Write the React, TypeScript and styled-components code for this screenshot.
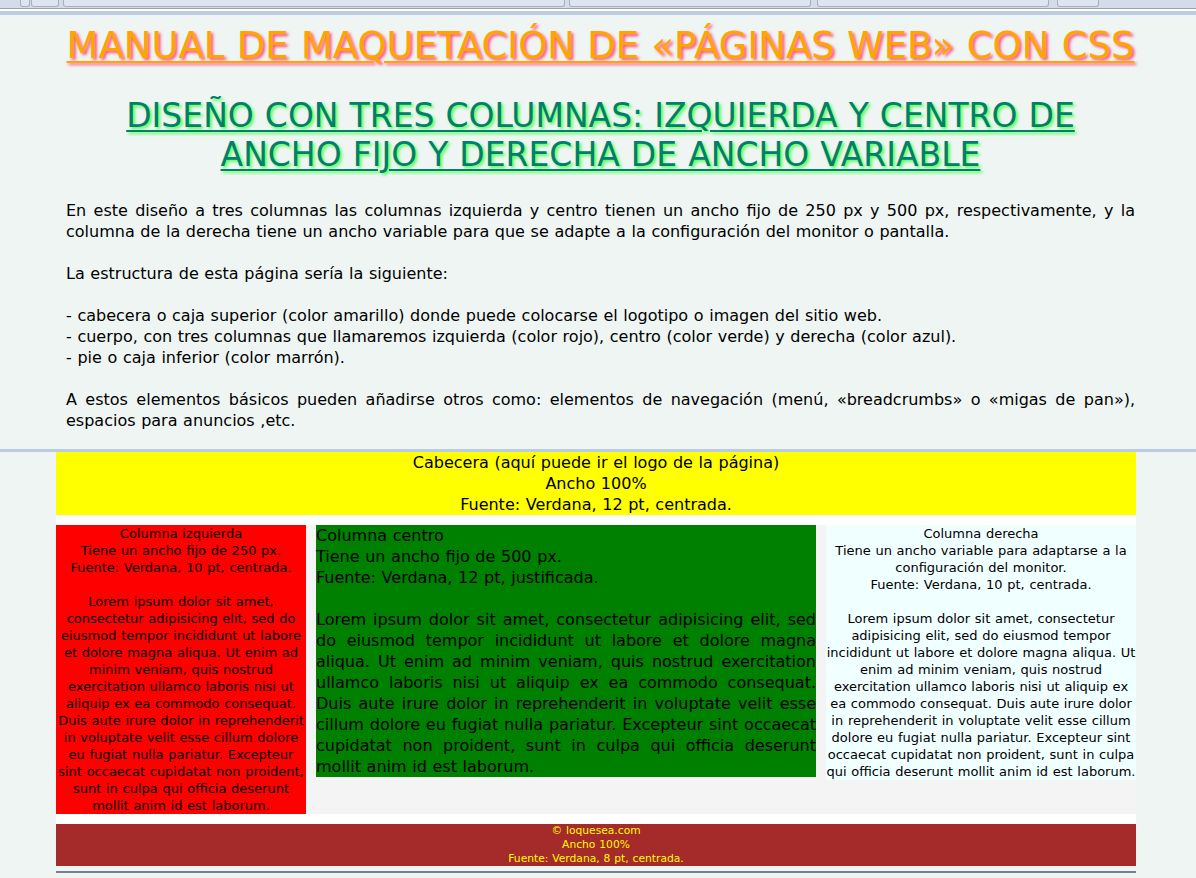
import React from "react";
import styled, { createGlobalStyle } from "styled-components";

const GlobalStyle = createGlobalStyle`
  html, body {
    margin: 0;
    padding: 0;
  }
  body {
    background: #eef5f3;
    font-family: "DejaVu Sans", Verdana, sans-serif;
    word-spacing: 0.034em;
    color: #000;
  }
`;

const LOREM =
  "Lorem ipsum dolor sit amet, consectetur adipisicing elit, sed do eiusmod tempor incididunt ut labore et dolore magna aliqua. Ut enim ad minim veniam, quis nostrud exercitation ullamco laboris nisi ut aliquip ex ea commodo consequat. Duis aute irure dolor in reprehenderit in voluptate velit esse cillum dolore eu fugiat nulla pariatur. Excepteur sint occaecat cupidatat non proident, sunt in culpa qui officia deserunt mollit anim id est laborum.";

// browser chrome strip at the very top of the capture
const Chrome = styled.div`
  height: 8px;
  background: #d4dcea;
  border-bottom: 1px solid #9aa2b2;
  display: flex;
  align-items: flex-start;
`;

const Tab = styled.span<{ $w: number; $gap: number }>`
  width: ${(p) => p.$w}px;
  margin-left: ${(p) => p.$gap}px;
  height: 6px;
  border: 1px solid #a7afbd;
  border-top: none;
  border-radius: 0 0 3px 3px;
  background: #dfe5f0;
`;

const ChromeEdge = styled.div`
  height: 2px;
  background: #fff;
  border-bottom: 4px solid #b8cce4;
`;

const Intro = styled.section`
  padding: 0 61px 0 66px;
`;

const MainTitle = styled.h1`
  margin: 10px 0 0;
  font-size: 37px;
  line-height: 42px;
  font-weight: normal;
  text-align: center;
  color: #ffa500;
  text-decoration: underline;
  text-decoration-thickness: 2px;
  text-underline-offset: 3px;
  text-shadow: 2px 2px 3px #ff4d80;
`;

const SubTitle = styled.h2`
  margin: 29px 0 0;
  font-size: 33px;
  line-height: 39px;
  font-weight: normal;
  text-align: center;
  color: #00806b;
  text-decoration: underline;
  text-decoration-thickness: 2px;
  text-underline-offset: 3px;
  text-shadow: 2px 2px 3px #4dff4d;
`;

const Text = styled.div`
  margin: 26px 0 18px;
  font-size: 16px;
  line-height: 21px;
  text-align: justify;

  p {
    margin: 0 0 21px;
  }
  p:last-child {
    margin-bottom: 0;
  }
`;

const Separator = styled.div`
  height: 3px;
  background: #b8cce4;
`;

const Layout = styled.div`
  margin-left: 56px;
  width: 1080px;
  background: #fff;
`;

const Header = styled.header`
  background: #ffff00;
  font-size: 16px;
  line-height: 21px;
  text-align: center;
`;

const Body = styled.div`
  margin-top: 10px;
  display: flex;
  align-items: flex-start;
  gap: 10px;
  background: #f4f4f4;
`;

const Column = styled.div<{ $bg: string; $w?: number; $big?: boolean }>`
  ${(p) => (p.$w ? `width: ${p.$w}px; flex: none;` : "flex: 1;")}
  background: ${(p) => p.$bg};
  font-size: ${(p) => (p.$big ? "16px" : "13px")};
  line-height: ${(p) => (p.$big ? "21px" : "17px")};
  text-align: ${(p) => (p.$big ? "justify" : "center")};
`;

const Footer = styled.footer`
  margin-top: 10px;
  background: #a52a2a;
  color: #ffff00;
  font-size: 10.7px;
  line-height: 14px;
  text-align: center;
`;

const Rule = styled.div`
  margin: 5px 0 0 56px;
  width: 1080px;
  height: 2px;
  background: #76808e;
`;

export default function App() {
  return (
    <>
      <GlobalStyle />
      <Chrome>
        <Tab $w={8} $gap={20} />
        <Tab $w={26} $gap={1} />
        <Tab $w={500} $gap={4} />
        <Tab $w={240} $gap={4} />
        <Tab $w={230} $gap={6} />
        <Tab $w={40} $gap={8} />
      </Chrome>
      <ChromeEdge />
      <Intro>
        <MainTitle>MANUAL DE MAQUETACIÓN DE «PÁGINAS WEB» CON CSS</MainTitle>
        <SubTitle>
          DISEÑO CON TRES COLUMNAS: IZQUIERDA Y CENTRO DE
          <br />
          ANCHO FIJO Y DERECHA DE ANCHO VARIABLE
        </SubTitle>
        <Text>
          <p>
            En este diseño a tres columnas las columnas izquierda y centro tienen un ancho fijo de
            250 px y 500 px, respectivamente, y la columna de la derecha tiene un ancho variable
            para que se adapte a la configuración del monitor o pantalla.
          </p>
          <p>La estructura de esta página sería la siguiente:</p>
          <p>
            - cabecera o caja superior (color amarillo) donde puede colocarse el logotipo o imagen
            del sitio web.
            <br />- cuerpo, con tres columnas que llamaremos izquierda (color rojo), centro (color
            verde) y derecha (color azul).
            <br />- pie o caja inferior (color marrón).
          </p>
          <p>
            A estos elementos básicos pueden añadirse otros como: elementos de navegación (menú,
            «breadcrumbs» o «migas de pan»), espacios para anuncios ,etc.
          </p>
        </Text>
      </Intro>
      <Separator />
      <Layout>
        <Header>
          Cabecera (aquí puede ir el logo de la página)
          <br />
          Ancho 100%
          <br />
          Fuente: Verdana, 12 pt, centrada.
        </Header>
        <Body>
          <Column $bg="#ff0000" $w={250}>
            Columna izquierda
            <br />
            Tiene un ancho fijo de 250 px.
            <br />
            Fuente: Verdana, 10 pt, centrada.
            <br />
            <br />
            {LOREM}
          </Column>
          <Column $bg="#008000" $w={500} $big>
            Columna centro
            <br />
            Tiene un ancho fijo de 500 px.
            <br />
            Fuente: Verdana, 12 pt, justificada.
            <br />
            <br />
            {LOREM}
          </Column>
          <Column $bg="#f0ffff">
            Columna derecha
            <br />
            Tiene un ancho variable para adaptarse a la configuración del monitor.
            <br />
            Fuente: Verdana, 10 pt, centrada.
            <br />
            <br />
            {LOREM}
          </Column>
        </Body>
        <Footer>
          © loquesea.com
          <br />
          Ancho 100%
          <br />
          Fuente: Verdana, 8 pt, centrada.
        </Footer>
      </Layout>
      <Rule />
    </>
  );
}
